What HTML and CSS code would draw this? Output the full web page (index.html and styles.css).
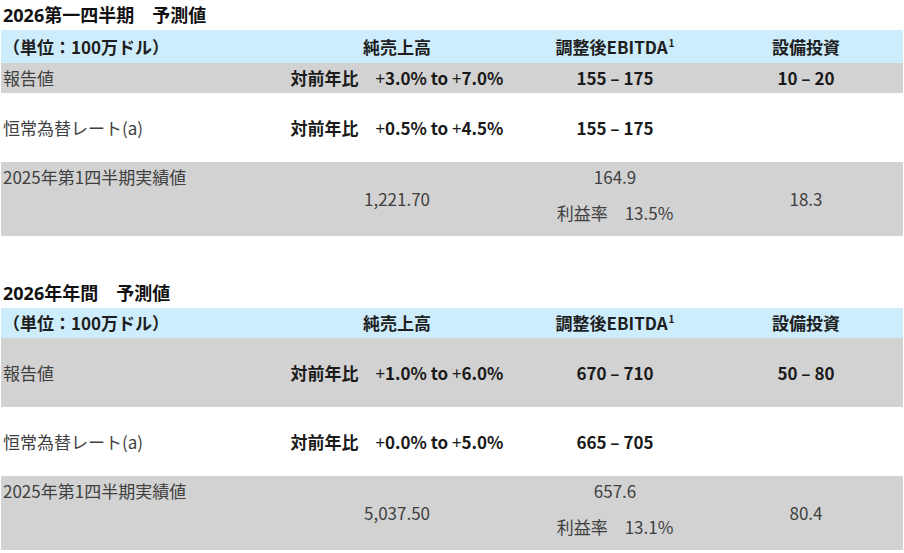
FILE: index.html
```html
<!DOCTYPE html>
<html lang="ja">
<head>
<meta charset="utf-8">
<title>2026 予測値</title>
<link rel="stylesheet" href="styles.css">
</head>
<body>
<section class="block">
  <h2 class="title">2026第一四半期　予測値</h2>
  <div class="table">
    <div class="row head h33">
      <div class="cell lbl">（単位：100万ドル）</div>
      <div class="cell">純売上高</div>
      <div class="cell">調整後EBITDA<sup>1</sup></div>
      <div class="cell">設備投資</div>
    </div>
    <div class="row gray h30">
      <div class="cell lbl reg">報告値</div>
      <div class="cell b">対前年比　<span class="pl">+</span>3.0% to <span class="pl">+</span>7.0%</div>
      <div class="cell b">155 – 175</div>
      <div class="cell b">10 – 20</div>
    </div>
    <div class="row h69">
      <div class="cell lbl reg">恒常為替レート(a)</div>
      <div class="cell b">対前年比　<span class="pl">+</span>0.5% to <span class="pl">+</span>4.5%</div>
      <div class="cell b">155 – 175</div>
      <div class="cell"></div>
    </div>
    <div class="row gray h74">
      <div class="cell lbl reg top">2025年第1四半期実績値</div>
      <div class="cell reg">1,221.70</div>
      <div class="cell reg stack"><span>164.9</span><span>利益率　13.5%</span></div>
      <div class="cell reg">18.3</div>
    </div>
  </div>
</section>

<section class="block second">
  <h2 class="title t2">2026年年間　予測値</h2>
  <div class="table">
    <div class="row head h30">
      <div class="cell lbl">（単位：100万ドル）</div>
      <div class="cell">純売上高</div>
      <div class="cell">調整後EBITDA<sup>1</sup></div>
      <div class="cell">設備投資</div>
    </div>
    <div class="row gray h69">
      <div class="cell lbl reg">報告値</div>
      <div class="cell b">対前年比　<span class="pl">+</span>1.0% to <span class="pl">+</span>6.0%</div>
      <div class="cell b">670 – 710</div>
      <div class="cell b">50 – 80</div>
    </div>
    <div class="row h69">
      <div class="cell lbl reg">恒常為替レート(a)</div>
      <div class="cell b">対前年比　<span class="pl">+</span>0.0% to <span class="pl">+</span>5.0%</div>
      <div class="cell b">665 – 705</div>
      <div class="cell"></div>
    </div>
    <div class="row gray h74">
      <div class="cell lbl reg top">2025年第1四半期実績値</div>
      <div class="cell reg">5,037.50</div>
      <div class="cell reg stack"><span>657.6</span><span>利益率　13.1%</span></div>
      <div class="cell reg">80.4</div>
    </div>
  </div>
</section>
</body>
</html>
```

FILE: styles.css
```css
* { box-sizing: border-box; }

html, body {
  margin: 0;
  padding: 0;
  background: #ffffff;
}

body {
  font-family: "Noto Sans CJK JP", "Noto Sans", sans-serif;
  font-size: 17px;
  color: #1a1a1a;
  width: 904px;
  height: 553px;
  overflow: hidden;
}

.block {
  padding-left: 1px;
}

.second {
  margin-top: 43px;
}

.title {
  margin: 0;
  padding-left: 2px;
  font-family: "Noto Sans", "Noto Sans CJK JP", sans-serif;
  font-size: 18px;
  font-weight: 700;
  line-height: 30px;
  height: 30px;
  color: #111;
}

.t2 {
  line-height: 29px;
  height: 29px;
}

.table {
  width: 902px;
  display: flex;
  flex-direction: column;
}

.row {
  display: grid;
  grid-template-columns: 279px 234px 202px 180px 7px;
  align-items: center;
}

.head {
  background: #cdedfc;
  font-weight: 700;
  color: #1e1e1e;
}

.gray {
  background: #d2d2d2;
}

.h30 { height: 30px; }
.h33 { height: 33px; }
.h69 { height: 69px; }
.h74 { height: 74px; }

.cell {
  text-align: center;
  line-height: 24px;
  white-space: nowrap;
}

.lbl {
  text-align: left;
  padding-left: 2px;
}

.reg {
  font-weight: 400;
  color: #404040;
}

.b {
  font-weight: 700;
  color: #1a1a1a;
}

.pl {
  font-weight: 400;
}

.top {
  align-self: start;
  padding-top: 3px;
}

.stack {
  align-self: start;
  padding-top: 3px;
  display: flex;
  flex-direction: column;
  align-items: center;
  gap: 12px;
}

sup {
  font-size: 10px;
  line-height: 0;
  vertical-align: 7px;
  margin-left: 1px;
}
```
